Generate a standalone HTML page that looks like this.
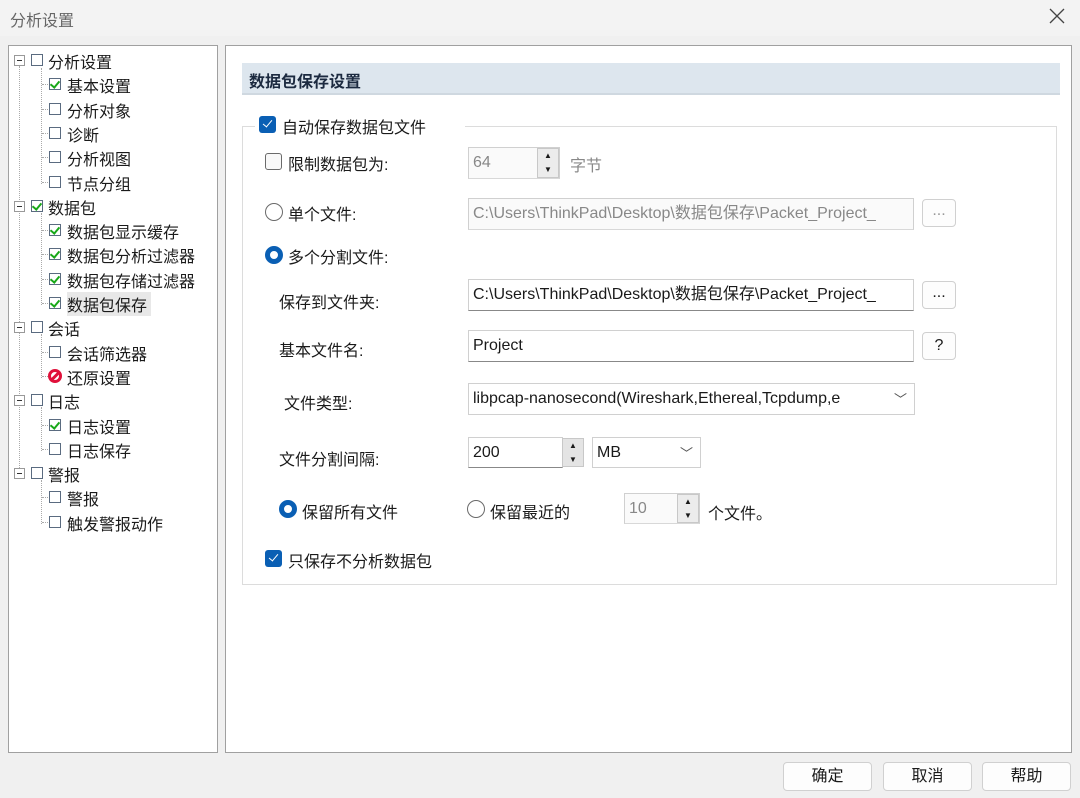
<!DOCTYPE html><html><head><meta charset="utf-8"><style>
*{box-sizing:border-box;margin:0;padding:0}
body{width:1080px;height:798px;background:#f0f0f0;font-family:"Liberation Sans","Noto Sans CJK SC",sans-serif;font-size:16px;color:#1a1a1a;position:relative;overflow:hidden}
.a{position:absolute;white-space:nowrap}
.panel{position:absolute;background:#fff;border:1px solid #a0a0a0}
.cb{position:absolute;width:12px;height:12px;border:1px solid #5a6b80;background:#fff}
.ck::after{content:"";position:absolute;left:2px;top:0px;width:4px;height:7px;border:solid #18a818;border-width:0 2px 2px 0;transform:rotate(40deg)}
.bcb{position:absolute;width:17px;height:17px;border-radius:3px;background:#0a5fb4}
.bcb::after{content:"";position:absolute;left:6px;top:2px;width:4px;height:8px;border:solid #fff;border-width:0 1.5px 1.5px 0;transform:rotate(40deg)}
.ecb{position:absolute;width:17px;height:17px;border-radius:3px;border:1px solid #6a6a6a;background:#f8f8f8}
.rad{position:absolute;width:18px;height:18px;border-radius:50%;border:1px solid #6a6a6a;background:#fff}
.rad.on{border:5px solid #0a5fb4}
.inp{position:absolute;background:#fff;border:1px solid #d0d0d0;border-bottom:1px solid #888;padding-left:4px;line-height:30px;overflow:hidden}
.dis{background:#fafafa;border-bottom-color:#d8d8d8;color:#888}
.btn{position:absolute;background:#fdfdfd;border:1px solid #d0d0d0;border-radius:4px;text-align:center}
.sp{position:absolute;width:22px;border:1px solid #c8c8c8;background:#ececec}
.sp div{height:50%;text-align:center;font-size:8px;line-height:13px}
.pm{position:absolute;width:11px;height:11px;border:1px solid #999;background:#fff}
.pm::after{content:"";position:absolute;left:2px;top:4px;width:5px;height:1px;background:#333}
.vl{position:absolute;border-left:1px dotted #aaa}
.hl{position:absolute;border-top:1px dotted #aaa;width:8px}
</style></head><body>
<div class="a" style="left:0;top:0;width:1080px;height:36px;background:#f3f3f3"></div>
<div class="a" style="left:10px;top:7px;color:#666">分析设置</div>
<svg class="a" style="left:1049px;top:8px" width="16" height="16"><path d="M1 1L15 15M15 1L1 15" stroke="#444" stroke-width="1.3"/></svg>

<div class="panel" style="left:8px;top:45px;width:210px;height:708px"></div>
<div class="panel" style="left:225px;top:45px;width:847px;height:708px"></div>

<div class="vl" style="left:19px;top:66px;height:410px"></div>
<div class="vl" style="left:41px;top:68px;height:116px"></div>
<div class="vl" style="left:41px;top:213px;height:92px"></div>
<div class="vl" style="left:41px;top:334px;height:44px"></div>
<div class="vl" style="left:41px;top:407px;height:44px"></div>
<div class="vl" style="left:41px;top:480px;height:44px"></div>
<div id="tree"></div>
<script>
var items=[[0,"分析设置",0],[1,"基本设置",1],[1,"分析对象",0],[1,"诊断",0],[1,"分析视图",0],[1,"节点分组",0],[0,"数据包",1],[1,"数据包显示缓存",1],[1,"数据包分析过滤器",1],[1,"数据包存储过滤器",1],[1,"数据包保存",1],[0,"会话",0],[1,"会话筛选器",0],[1,"还原设置",2],[0,"日志",0],[1,"日志设置",1],[1,"日志保存",0],[0,"警报",0],[1,"警报",0],[1,"触发警报动作",0]];
var h="";items.forEach(function(it,i){var y=60+i*24.3;
if(it[0]==0){h+='<div class="pm" style="left:14px;top:'+(y-5)+'px"></div><div class="cb'+(it[2]?' ck':'')+'" style="left:31px;top:'+(y-6)+'px"></div><div class="a" style="left:48px;top:'+(y-11)+'px">'+it[1]+'</div>';}
else{h+='<div class="hl" style="left:42px;top:'+y+'px"></div>';
if(it[2]==2)h+='<div class="a" style="left:48px;top:'+(y-7)+'px;width:14px;height:14px;border-radius:50%;border:3px solid #e0103a;background:#fff"><div style="position:absolute;left:-1px;top:3px;width:10px;height:3px;background:#e0103a;transform:rotate(-45deg)"></div></div>';
else h+='<div class="cb'+(it[2]?' ck':'')+'" style="left:49px;top:'+(y-6)+'px"></div>';
h+='<div class="a" style="left:67px;top:'+(y-11)+'px;'+(i==10?'background:#e8e8e8;padding-right:4px':'')+'">'+it[1]+'</div>';}});
document.getElementById('tree').innerHTML=h;
</script>

<div class="a" style="left:242px;top:63px;width:818px;height:32px;background:#dde6ee;border-bottom:2px solid #cfd8e0"></div>
<div class="a" style="left:249px;top:68px;font-weight:bold;color:#1c2a40">数据包保存设置</div>
<div class="a" style="left:242px;top:126px;width:815px;height:459px;border:1px solid #dcdcdc"></div>
<div class="a" style="left:255px;top:114px;width:210px;height:22px;background:#fff"></div>
<div class="bcb" style="left:259px;top:116px"></div>
<div class="a" style="left:282px;top:114px">自动保存数据包文件</div>

<div class="ecb" style="left:265px;top:153px"></div>
<div class="a" style="left:288px;top:151px">限制数据包为:</div>
<div class="inp dis" style="left:468px;top:147px;width:92px;height:32px">64</div>
<div class="sp" style="left:537px;top:148px;height:30px"><div>▲</div><div>▼</div></div>
<div class="a" style="left:570px;top:152px;color:#888">字节</div>

<div class="rad" style="left:265px;top:203px"></div>
<div class="a" style="left:288px;top:201px">单个文件:</div>
<div class="inp dis" style="left:468px;top:198px;width:446px;height:32px">C:\Users\ThinkPad\Desktop\数据包保存\Packet_Project_</div>
<div class="btn" style="left:922px;top:199px;width:34px;height:28px;color:#999;line-height:22px">...</div>

<div class="rad on" style="left:265px;top:246px"></div>
<div class="a" style="left:288px;top:244px">多个分割文件:</div>

<div class="a" style="left:279px;top:289px">保存到文件夹:</div>
<div class="inp" style="left:468px;top:279px;width:446px;height:32px">C:\Users\ThinkPad\Desktop\数据包保存\Packet_Project_</div>
<div class="btn" style="left:922px;top:281px;width:34px;height:28px;line-height:22px">...</div>

<div class="a" style="left:279px;top:337px">基本文件名:</div>
<div class="inp" style="left:468px;top:330px;width:446px;height:32px">Project</div>
<div class="btn" style="left:922px;top:332px;width:34px;height:28px;line-height:26px">?</div>

<div class="a" style="left:284px;top:390px">文件类型:</div>
<div class="inp" style="left:468px;top:383px;width:447px;height:32px;border-bottom-color:#d0d0d0">libpcap-nanosecond(Wireshark,Ethereal,Tcpdump,e</div>
<div class="a" style="left:894px;top:389px;color:#555;font-size:13px">﹀</div>

<div class="a" style="left:279px;top:446px">文件分割间隔:</div>
<div class="inp" style="left:468px;top:437px;width:95px;height:31px">200</div>
<div class="sp" style="left:562px;top:438px;height:29px;background:#e4e4e4"><div>▲</div><div>▼</div></div>
<div class="inp" style="left:592px;top:437px;width:109px;height:31px;border-bottom-color:#d0d0d0">MB</div>
<div class="a" style="left:680px;top:443px;color:#555;font-size:13px">﹀</div>

<div class="rad on" style="left:279px;top:500px"></div>
<div class="a" style="left:302px;top:499px">保留所有文件</div>
<div class="rad" style="left:467px;top:500px"></div>
<div class="a" style="left:490px;top:499px">保留最近的</div>
<div class="inp dis" style="left:624px;top:493px;width:76px;height:31px">10</div>
<div class="sp" style="left:677px;top:494px;height:29px"><div>▲</div><div>▼</div></div>
<div class="a" style="left:708px;top:500px">个文件。</div>

<div class="bcb" style="left:265px;top:550px"></div>
<div class="a" style="left:288px;top:548px">只保存不分析数据包</div>

<div class="btn" style="left:783px;top:762px;width:89px;height:29px;line-height:27px">确定</div>
<div class="btn" style="left:883px;top:762px;width:89px;height:29px;line-height:27px">取消</div>
<div class="btn" style="left:982px;top:762px;width:89px;height:29px;line-height:27px">帮助</div>
</body></html>
